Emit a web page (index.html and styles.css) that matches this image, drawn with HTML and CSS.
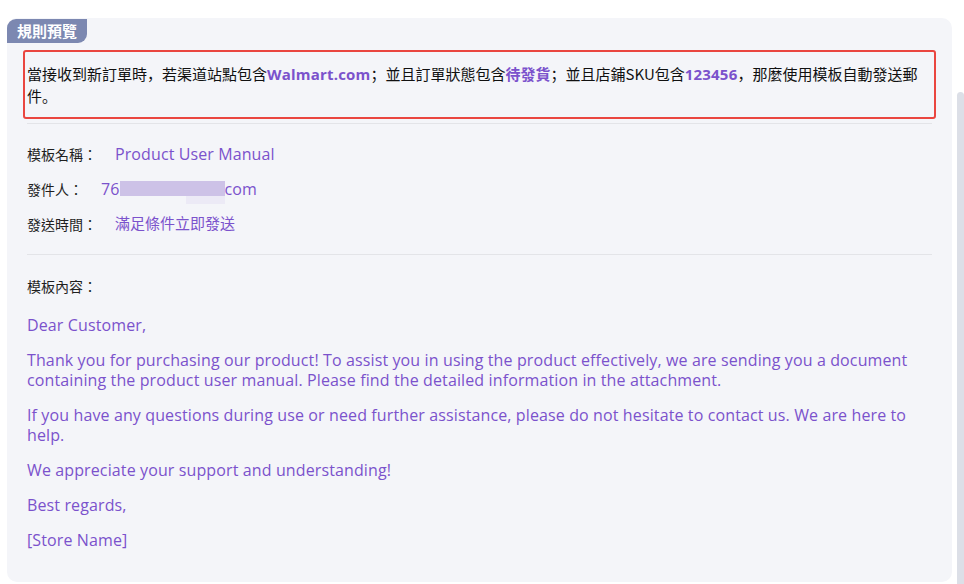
FILE: index.html
```html
<!DOCTYPE html>
<html lang="zh-CN">
<head>
<meta charset="utf-8">
<link rel="stylesheet" href="styles.css">
</head>
<body>
<div class="page">
  <section class="card">
    <div class="tag">規則預覽</div>
    <div class="rule">當接收到新訂單時，若渠道站點包含<b class="hl">Walmart.com</b>；並且訂單狀態包含<b class="hl hl-cjk">待發貨</b>；並且店鋪SKU包含<b class="hl">123456</b>，那麼使用模板自動發送郵件。</div>
    <div class="divider first"></div>
    <div class="fields">
      <div class="row"><span class="label" lang="zh-Hant">模板名稱：</span><span class="value">Product User Manual</span></div>
      <div class="row"><span class="label" lang="zh-Hant">發件人：</span><span class="value">76<span class="blur"><span class="blur-a"></span><span class="blur-b"></span></span>com</span></div>
      <div class="row"><span class="label" lang="zh-Hant">發送時間：</span><span class="value value-cjk">滿足條件立即發送</span></div>
    </div>
    <div class="divider"></div>
    <div class="content-label" lang="zh-Hant">模板內容：</div>
    <div class="mail">
      <p>Dear Customer,</p>
      <p>Thank you for purchasing our product! To assist you in using the product effectively, we are sending you a document containing the product user manual. Please find the detailed information in the attachment.</p>
      <p>If you have any questions during use or need further assistance, please do not hesitate to contact us. We are here to help.</p>
      <p>We appreciate your support and understanding!</p>
      <p>Best regards,</p>
      <p>[Store Name]</p>
    </div>
  </section>
  <div class="scrollbar"></div>
</div>
</body>
</html>
```

FILE: styles.css
```css
* { box-sizing: border-box; }
body {
  margin: 0;
  background: #ffffff;
  font-family: "Open Sans", "Noto Sans CJK SC", sans-serif;
  color: #1f1f1f;
}
.page {
  display: flex;
  align-items: flex-start;
  padding: 18px 0 0 7px;
  height: 584px;
  overflow: hidden;
}
.card {
  width: 945px;
  height: 564px;
  background: #f4f5f9;
  border-radius: 10px;
  padding: 0 20px 32px 20px;
  flex-shrink: 0;
}
.tag {
  margin-left: -20px;
  margin-top: 1px;
  width: 80px;
  height: 24px;
  line-height: 24px;
  background: #7c88b1;
  color: #ffffff;
  font-weight: 700;
  font-size: 15px;
  text-align: center;
  border-radius: 9px 0 9px 0;
  font-family: "Noto Sans CJK SC", sans-serif;
}
.rule {
  margin: 7px -4px 0 -4px;
  border: 2px solid #ea4640;
  border-radius: 3px;
  padding: 11px 14px 10px 2px;
  font-size: 15px;
  line-height: 22px;
  font-family: "Noto Sans CJK SC", sans-serif;
  color: #111;
}
.hl {
  color: #7b52cc;
  font-weight: 700;
  font-family: "Open Sans", "Noto Sans CJK SC", sans-serif;
  font-size: 15px;
  letter-spacing: 0.2px;
}
.hl-cjk {
  font-family: "Noto Sans CJK SC", sans-serif;
  letter-spacing: 0;
}
.divider {
  height: 1px;
  background: #e3e4e8;
  margin-top: 20px;
}
.divider.first { margin-top: 4px; }
.fields {
  display: flex;
  flex-direction: column;
  gap: 15px;
  padding-top: 20px;
}
.row {
  display: flex;
  align-items: center;
  height: 20px;
  line-height: 20px;
  font-size: 14px;
}
.label {
  font-family: "Noto Sans CJK SC", sans-serif;
  color: #1f1f1f;
  line-height: 20px;
}
.value {
  margin-left: 18px;
  color: #7b52cc;
  font-size: 16px;
  letter-spacing: 0.1px;
  line-height: 20px;
  display: flex;
  align-items: center;
}
.value-cjk {
  font-family: "Noto Sans CJK SC", sans-serif;
  font-size: 15px;
  letter-spacing: 0;
  margin-top: -2px;
}
.blur {
  position: relative;
  width: 105px;
  height: 20px;
  display: inline-block;
}
.blur-a {
  position: absolute;
  left: 0; top: 2px;
  width: 105px; height: 15px;
  background: #cdc2e7;
}
.blur-b {
  position: absolute;
  left: 66px; top: 17px;
  width: 39px; height: 8px;
  background: #eceaf6;
}
.content-label {
  margin-top: 21px;
  font-size: 14px;
  line-height: 20px;
  font-family: "Noto Sans CJK SC", sans-serif;
}
.mail {
  margin-top: 19px;
  color: #7b52cc;
  font-size: 16px;
  letter-spacing: 0.12px;
  line-height: 20px;
}
.mail p { margin: 0 0 15px 0; }
.scrollbar {
  width: 7px;
  height: 492px;
  margin-top: 74px;
  margin-left: 5px;
  background: #dcdfe7;
  border-radius: 6px 6px 0 0;
  flex-shrink: 0;
}
```
